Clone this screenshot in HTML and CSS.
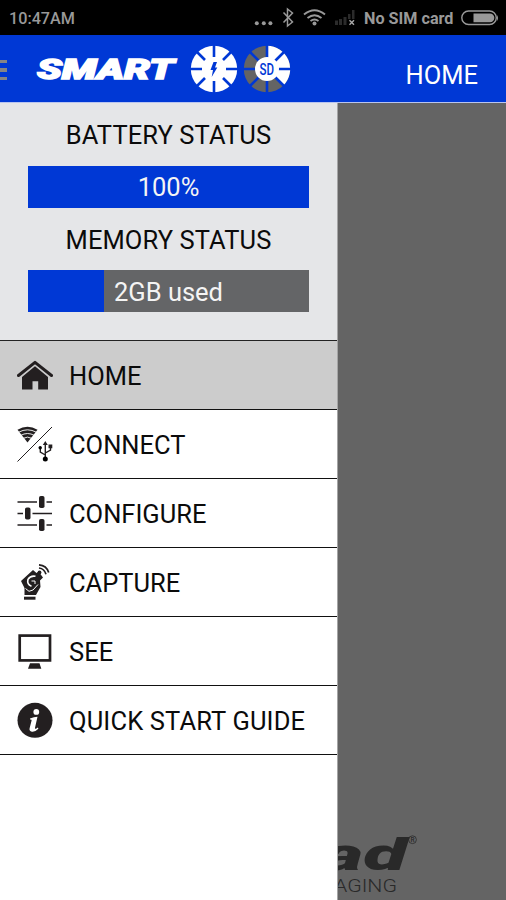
FILE: index.html
```html
<!DOCTYPE html>
<html lang="en">
<head>
<meta charset="utf-8">
<title>SMART</title>
<link rel="stylesheet" href="styles.css">
</head>
<body>
<div class="screen">
  <div class="statusbar">
    <span class="clock">10:47AM</span>
    <svg class="signals" width="104" height="35" viewBox="0 0 104 35">
      <g fill="#999"><circle cx="6.800" cy="23.300" r="2"/><circle cx="13.800" cy="23.300" r="2"/><circle cx="20.400" cy="23.300" r="2"/></g>
      <path d="M33.500 12.500l9 9.500-5 4V9l5 4-9 9.500" fill="none" stroke="#999" stroke-width="1.500"/>
      <g fill="none" stroke="#999" stroke-width="1.900"><path d="M54 14.600q10.500-8.800 21 0M57.500 18q7-5.500 14 0M60.500 21q4-3 8 0"/></g>
      <circle cx="64.500" cy="23.500" r="2" fill="#999"/>
      <g fill="#2b2b2b"><path d="M85 20.500h3v4.500h-3zM89 19h3v6h-3zM93.500 17h3v8h-3zM98 14h2.500v5H98zM102 10h2.500v9H102z"/></g>
      <path d="M99.500 20.300l4.500 4.500m0-4.500l-4.500 4.500" stroke="#aaa" stroke-width="1.400"/>
    </svg>
    <span class="carrier">No SIM card</span>
    <svg class="battery" width="38" height="16" viewBox="0 0 38 16">
      <rect x=".8" y="1" width="34.500" height="13.500" rx="6.700" fill="none" stroke="#999" stroke-width="1.400"/>
      <path d="M12.500 3.500h16.500a4.300 4.300 0 0 1 0 8.700H12.500zM36 5q2 3 0 6z" fill="#999"/>
    </svg>
  </div>

  <header class="appbar">
    <div class="burger"><i></i><i></i><i></i></div>
    <svg class="brand" width="142" height="26" viewBox="0 0 142 26">
      <text class="brand-text" x="2" y="22.500" textLength="137" lengthAdjust="spacingAndGlyphs">SMART</text>
    </svg>
    <svg class="dial" width="48" height="48" viewBox="-24 -24 48 48">
      <circle r="23.200" fill="#fff"/>
      <path class="spokes" d="M0-24v12M0 24V12M-24 0h12M24 0H12M-17-17l8 8M17 17l-8-8M17-17l-8 8M-17 17l8-8"/>
      <path d="M-.500-7H3L1-1.500H3.300L-2.300 8-1 1H-3.500z" fill="#0038d5"/>
    </svg>
    <svg class="dial" width="48" height="48" viewBox="-24 -24 48 48">
      <circle r="23.200" fill="#646464"/>
      <path d="M0 0V-23.200A23.200 23.200 0 0 1 16.400 16.400z" fill="#fff"/>
      <path class="spokes" d="M0-24v14M0 24V10M-24 0h14M24 0H10M-17-17l9 9M17 17l-9-9M17-17l-9 9M-17 17l9-9"/>
      <circle r="12" fill="#fff"/>
      <text class="sd" x="-7.500" y="6.300" textLength="14.500" lengthAdjust="spacingAndGlyphs">SD</text>
    </svg>
    <h1 class="title">HOME</h1>
  </header>

  <div class="content">
    <aside class="drawer">
      <section class="stats">
        <h2 class="battery-title">BATTERY STATUS</h2>
        <div class="meter full">100%</div>
        <h2 class="memory-title">MEMORY STATUS</h2>
        <div class="meter partial">2GB used</div>
      </section>
      <nav class="menu">
        <a class="item active">
          <svg class="icon" viewBox="0 0 36 36"><path d="M1.500 18.500L18 5.300l16.500 13.200" fill="none" stroke="#231f20" stroke-width="3" stroke-linecap="round" stroke-linejoin="round"/><path d="M5 20L18 9.200l13 10.800v12.500h-9.800v-8.200h-5.700v8.200H5z" fill="#231f20"/></svg>
          <span>HOME</span></a>
        <a class="item">
          <svg class="icon" viewBox="0 0 36 36"><path d="M.5 35.500L35 1" stroke="#231f20" stroke-width="1"/><path d="M.5 3.800Q10.500-2.500 20.500 3.800L10.500 16.500z" fill="#231f20"/><path d="M1.500 6.300q9-5 18 0M3.500 9.500q7-4 14 0M5.800 12.500q4.700-2.800 9.400 0" fill="none" stroke="#fff" stroke-width=".9"/><path d="M28.300 18v15M28.300 29l-5-3v-4.500M28.300 27l5.200-3v-3" fill="none" stroke="#231f20" stroke-width="1.400"/><path d="M28.300 15l2.500 4h-5zM31.500 18.500h3.800v3.800h-3.800z" fill="#231f20"/><circle cx="23.200" cy="21.800" r="1.700"/><circle cx="28.300" cy="33" r="2.500"/></svg>
          <span>CONNECT</span></a>
        <a class="item">
          <svg class="icon" viewBox="0 0 36 36"><path d="M.5 7H20M29.500 7H35M.5 18.500H6M15.500 18.500H35M.5 30H20M29.500 30H35" stroke="#231f20" stroke-width="1.700"/><g fill="#231f20"><rect x="22" y="1" width="5.500" height="12" rx="1.800"/><rect x="8" y="12.500" width="5.500" height="12" rx="1.800"/><rect x="22" y="24" width="5.500" height="12" rx="1.800"/></g></svg>
          <span>CONFIGURE</span></a>
        <a class="item">
          <svg class="icon" viewBox="0 0 36 36"><path d="M4 17L16 6l3.500 3L21.500 7.500l4.500 6-3 3 .5 6.500-4.500 8H7.500v-7z" fill="#231f20"/><path d="M7 32.700h11.500v3H7z" fill="#231f20"/><path d="M18.500 12.300q-5-1-7.500 3-1.300 5.200 3.500 7" fill="none" stroke="#fff" stroke-width="1.600"/><path d="M14.500 17h3.500v3M8.500 24.500l3.500 2.800 4-1.300 5-5.500" fill="none" stroke="#fff" stroke-width="1"/><g fill="none" stroke="#231f20" stroke-width="1.700"><path d="M22 4q5.500.8 7 6.300M22 .9q7.500.6 9.700 7.600"/></g><circle cx="22.500" cy="8.500" r="1.900" fill="#231f20"/></svg>
          <span>CAPTURE</span></a>
        <a class="item">
          <svg class="icon" viewBox="0 0 36 36"><rect x="2.700" y="2.600" width="30.300" height="24.800" fill="none" stroke="#231f20" stroke-width="2.700"/><path d="M13 30.300h9.500l1.800 5.500H11z" fill="#231f20"/></svg>
          <span>SEE</span></a>
        <a class="item">
          <svg class="icon" viewBox="0 0 36 36"><circle cx="18" cy="18.300" r="17.500" fill="#231f20"/><circle cx="19.300" cy="9.900" r="2.900" fill="#fff"/><path d="M13 16.500q4-1.500 7.500-1.800l-2.500 11q-.3 1.500 1 1l1.800-1.200.6 1.200q-3.500 3.500-6.500 3-3-.7-2.300-3.500l2-7.700q.3-1.300-1.600-1z" fill="#fff"/></svg>
          <span class="guide">QUICK START GUIDE</span></a>
      </nav>
    </aside>
    <main class="page">
      <svg class="maker" width="90" height="68" viewBox="0 0 90 68">
        <text class="maker-name" x="-16" y="38" textLength="85" lengthAdjust="spacingAndGlyphs">ad</text>
        <circle cx="74.500" cy="7.700" r="3.900" fill="none" stroke="#292929" stroke-width=".8"/>
        <text class="reg" x="72.500" y="10.300">R</text>
        <text class="maker-sub" x="-4" y="60" textLength="63" lengthAdjust="spacingAndGlyphs">AGING</text>
      </svg>
    </main>
  </div>
</div>
</body>
</html>
```
FILE: styles.css
```css
* { box-sizing: border-box; }
body { margin: 0; font-family: Roboto, "Liberation Sans", sans-serif; }
h1, h2 { margin: 0; font-weight: 400; }
svg { display: block; flex: none; }
.screen { width: 506px; height: 900px; display: flex; flex-direction: column; overflow: hidden; }

.statusbar { height: 35px; flex: none; background: #000; color: #999; display: flex; align-items: center; padding: 1px 7px 0 9px; white-space: nowrap; }
.clock { font-size: 16.200px; font-weight: 500; }
.signals { margin: -1px 0 0 auto; overflow: visible; }
.carrier { margin-left: 10px; width: 89px; font-weight: 700; font-size: 16.200px; }
.battery { margin-left: 8px; }

.appbar { height: 68px; flex: none; background: #0038d5; color: #fff; display: flex; align-items: center; border-bottom: 1px solid #b9c5f0; }
.burger { width: 6.500px; display: grid; gap: 5px; margin-top: 3px; }
.burger i { height: 3.500px; background: #858585; }
.brand { margin: 0 0 0 28.500px; overflow: visible; }
.brand-text { font: italic 900 28px Roboto, sans-serif; fill: #fff; stroke: #fff; stroke-width: 1.500px; }
.dial { margin-left: 13px; }
.dial + .dial { margin-left: 5px; }
.spokes { stroke: #0038d5; stroke-width: 2.600px; fill: none; }
.sd { font: 500 17px Roboto, sans-serif; fill: #0038d5; }
.title { margin: 12px 28px 0 auto; font-size: 25.500px; line-height: 30px; }

.content { flex: 1; display: flex; min-height: 0; }
.drawer { width: 338px; background: #fff; border-right: 1px solid #a5a5a5; }
.stats { height: 237px; background: #e5e6e8; padding: 17px 28px 0; text-align: center; }
.stats h2 { font-size: 25.500px; line-height: 30px; letter-spacing: .1px; color: #0b0b0b; white-space: nowrap; }
.meter { height: 42px; line-height: 43px; font-size: 25.500px; color: #f4f4f4; background: #0038d5; }
.battery-title { margin-bottom: 15.500px; }
.memory-title { margin: 17.500px 0 15px; }
.partial { line-height: 44px; background: linear-gradient(90deg, #0038d5 76px, #646567 76px); }
.menu { border-top: 1px solid #222; }
.item { height: 69px; display: flex; align-items: center; padding: 0 0 0 16.500px; gap: 16.500px; border-bottom: 1px solid #111; font-size: 25.500px; color: #0b0b0b; white-space: nowrap; }
.item span { padding-top: 2px; }
.item .guide { letter-spacing: .14px; }
.active { background: #ccc; }
.icon { width: 36px; height: 36px; }

.page { flex: 1; background: #646464; display: flex; align-items: flex-end; overflow: hidden; }
.maker { overflow: hidden; }
.maker-name { font: italic 900 45px Roboto, sans-serif; fill: #292929; }
.maker-sub { font: 300 19px Roboto, sans-serif; fill: #292929; }
.reg { font: 500 6.500px Roboto, sans-serif; fill: #292929; }
```
